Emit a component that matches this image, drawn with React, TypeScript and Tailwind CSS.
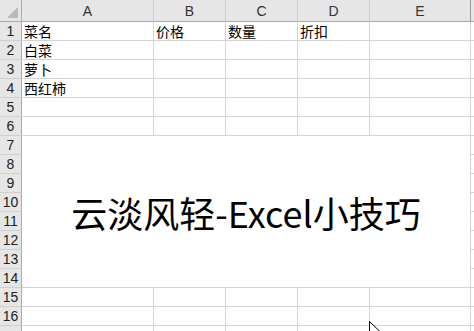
import React from "react";

const cols = ["A", "B", "C", "D", "E"];
const data: Record<number, string[]> = {
  1: ["菜名", "价格", "数量", "折扣", ""],
  2: ["白菜", "", "", "", ""],
  3: ["萝卜", "", "", "", ""],
  4: ["西红柿", "", "", "", ""],
  5: ["", "", "", "", ""],
  6: ["", "", "", "", ""],
  15: ["", "", "", "", ""],
  16: ["", "", "", "", ""],
  17: ["", "", "", "", ""],
};

const cjk = { fontFamily: '"Noto Sans CJK SC", "Noto Sans", sans-serif' };
const num = { fontFamily: '"Liberation Sans", Arial, sans-serif' };

function RowHead({ n }: { n: number }) {
  return (
    <div
      className="bg-[#e6e6e6] border-r border-b border-r-[#ababab] border-b-[#d0d0d0] flex items-end justify-center text-[14px] leading-[17px] text-[#222]"
      style={num}
    >
      {n < 17 ? n : ""}
    </div>
  );
}

function Cell({ text }: { text?: string }) {
  return (
    <div
      className="bg-white border-r border-b border-[#d4d4d4] flex items-end pl-[2px] text-[14px] leading-[18px] text-black whitespace-nowrap overflow-visible"
      style={cjk}
    >
      {text}
    </div>
  );
}

export default function App() {
  const rows: React.ReactNode[] = [];
  for (let r = 1; r <= 17; r++) {
    rows.push(<RowHead key={"h" + r} n={r} />);
    if (r >= 7 && r <= 14) {
      if (r === 7) {
        rows.push(
          <div
            key="merged"
            className="bg-white border-r border-b border-[#d4d4d4] flex items-center justify-center text-[36px] leading-none text-black whitespace-nowrap"
            style={{ ...cjk, gridColumn: "2 / span 5", gridRow: "8 / span 8" }}
          >
            云淡风轻-Excel小技巧
          </div>
        );
      }
      rows.push(
        <div
          key={"f" + r}
          className="bg-white border-b border-[#d4d4d4]"
          style={{ gridColumn: "7", gridRow: String(r + 1) }}
        />
      );
      continue;
    }
    const d = data[r] || ["", "", "", "", ""];
    d.forEach((t, i) => rows.push(<Cell key={r + "-" + i} text={t} />));
    rows.push(<div key={"f" + r} className="bg-white border-b border-[#d4d4d4]" />);
  }

  return (
    <div className="relative w-[474px] h-[331px] overflow-hidden bg-white">
      <div className="grid grid-cols-[22px_132px_72px_72px_72px_101px_20px] grid-rows-[22px_repeat(17,19px)] w-[491px]">
        <div className="bg-[#e6e6e6] border-r border-b border-r-[#ababab] border-b-[#ababab] relative">
          <svg className="absolute left-0 top-0" width="21" height="21" viewBox="0 0 21 21">
            <polygon points="7,18 18,18 18,7" fill="#b8b8b8" />
          </svg>
        </div>
        {cols.map((c, i) => (
          <div
            key={c}
            className={
              "bg-[#e6e6e6] border-b border-r border-b-[#ababab] flex items-end justify-center text-[14px] leading-[19px] text-[#333] " +
              (i === 4 ? "border-r-[#9a9a9a]" : "border-r-[#d0d0d0]")
            }
            style={num}
          >
            {c}
          </div>
        ))}
        <div className="bg-[#e6e6e6] border-b border-b-[#ababab]" />
        {rows}
      </div>
      <svg
        className="absolute left-[369px] top-[321px]"
        width="13"
        height="20"
        viewBox="0 0 13 20"
      >
        <path
          d="M0.5 0.5 L0.5 16.5 L4.5 12.5 L7 18.5 L9.5 17.5 L7 11.5 L12 11.5 Z"
          fill="#fff"
          stroke="#000"
          strokeWidth="1"
        />
      </svg>
    </div>
  );
}
